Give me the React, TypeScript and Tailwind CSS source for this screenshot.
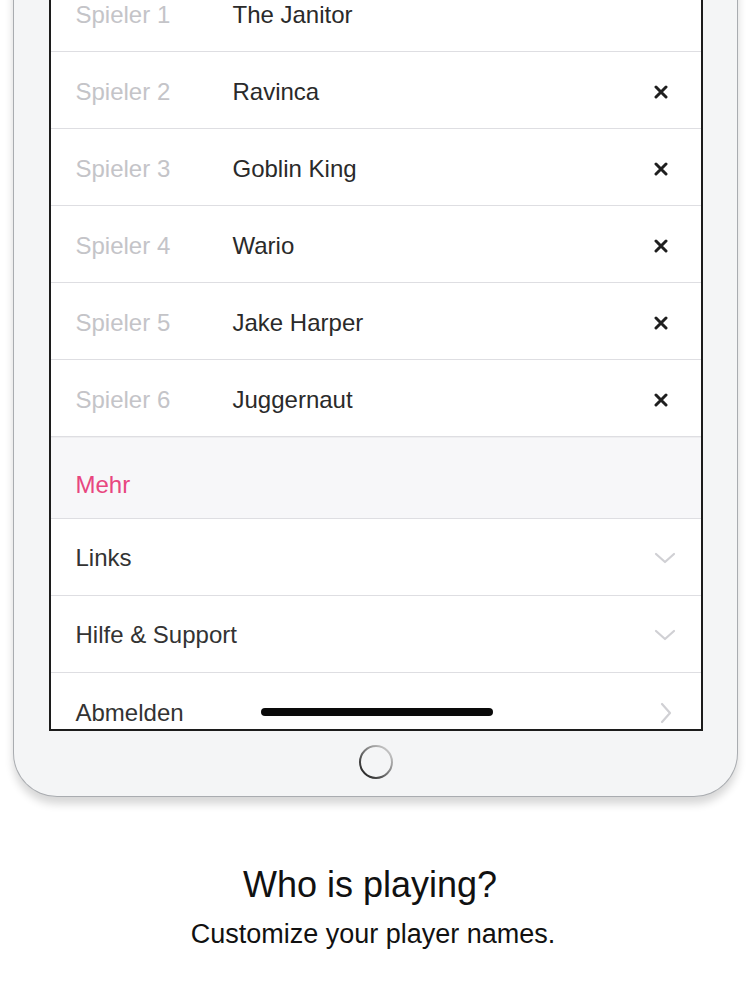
import React from 'react'

const players = ['The Janitor', 'Ravinca', 'Goblin King', 'Wario', 'Jake Harper', 'Juggernaut']

function CloseIcon() {
  return (
    <svg width="14" height="14" viewBox="0 0 14 14" className="shrink-0">
      <path d="M2 2 L12 12 M12 2 L2 12" stroke="#1f1f1f" strokeWidth="3" strokeLinecap="round" />
    </svg>
  )
}

function ChevronDown() {
  return (
    <svg width="22" height="12" viewBox="0 0 22 12" className="shrink-0">
      <path d="M2 2 L11 10 L20 2" fill="none" stroke="#d0d0d4" strokeWidth="2.2" strokeLinecap="round" strokeLinejoin="round" />
    </svg>
  )
}

function ChevronRight() {
  return (
    <svg width="12" height="22" viewBox="0 0 12 22" className="shrink-0">
      <path d="M2 2 L10 11 L2 20" fill="none" stroke="#d0d0d4" strokeWidth="2.2" strokeLinecap="round" strokeLinejoin="round" />
    </svg>
  )
}

function HomeButton() {
  return (
    <svg width="36" height="36" viewBox="0 0 36 36">
      <defs>
        <linearGradient id="ring" x1="1" y1="0" x2="0" y2="1">
          <stop offset="0" stopColor="#e0e0e0" />
          <stop offset="0.5" stopColor="#777" />
          <stop offset="1" stopColor="#111" />
        </linearGradient>
      </defs>
      <circle cx="18" cy="18" r="16" fill="#f4f5f6" stroke="url(#ring)" strokeWidth="2" />
    </svg>
  )
}

export default function App() {
  return (
    <div className="min-h-[1000px] bg-white overflow-hidden" style={{ fontFamily: '"Liberation Sans", Arial, sans-serif' }}>
      {/* tablet body */}
      <div className="-mt-[25px] ml-[13px] w-[725px] bg-[#f4f5f6] border-x border-b border-[#a9acb0] rounded-b-[44px] px-[34px] pb-[16px] shadow-[0_7px_9px_rgba(0,0,0,0.16)] flex flex-col items-center">
        {/* screen */}
        <div className="relative w-[654px] h-[756px] border-x-2 border-b-2 border-[#1c1c1c] bg-white overflow-hidden">
          {players.map((name, i) => (
            <div key={name} className="h-[77px] border-b border-[#dedee2] flex items-center pt-[3px] pl-[25px] pr-[33px]">
              <span className="w-[157px] text-[24px] text-[#c4c4c8]">Spieler {i + 1}</span>
              <span className="flex-1 text-[24px] text-[#2a2a2a]">{name}</span>
              {i > 0 && <CloseIcon />}
            </div>
          ))}
          <div className="h-[82px] bg-[#f7f7f9] border-b border-[#dedee2] border-t border-t-[#eeeef0] flex items-end pb-[15px] pl-[25px]">
            <span className="text-[24px] text-[#e8467f]">Mehr</span>
          </div>
          <div className="h-[77px] border-b border-[#dedee2] flex items-center justify-between pt-[2px] pl-[25px] pr-[25px]">
            <span className="text-[24px] text-[#333]">Links</span>
            <ChevronDown />
          </div>
          <div className="h-[77px] border-b border-[#dedee2] flex items-center justify-between pt-[2px] pl-[25px] pr-[25px]">
            <span className="text-[24px] text-[#333]">Hilfe &amp; Support</span>
            <ChevronDown />
          </div>
          <div className="h-[77px] flex items-center justify-between pt-[2px] pl-[25px] pr-[29px]">
            <span className="text-[24px] text-[#333]">Abmelden</span>
            <ChevronRight />
          </div>
          {/* home indicator */}
          <div className="absolute bottom-[13px] left-[210px] w-[232px] h-[8px] rounded-full bg-[#0a0a0a]" />
        </div>
        <div className="mt-[13px]">
          <HomeButton />
        </div>
      </div>

      <div className="mt-[66px] flex flex-col items-center text-[#111]">
        <h1 className="text-[36px] leading-[44px] pr-[10px]">Who is playing?</h1>
        <p className="mt-[11px] text-[27px] leading-[32px] pr-[4px]">Customize your player names.</p>
      </div>
    </div>
  )
}
